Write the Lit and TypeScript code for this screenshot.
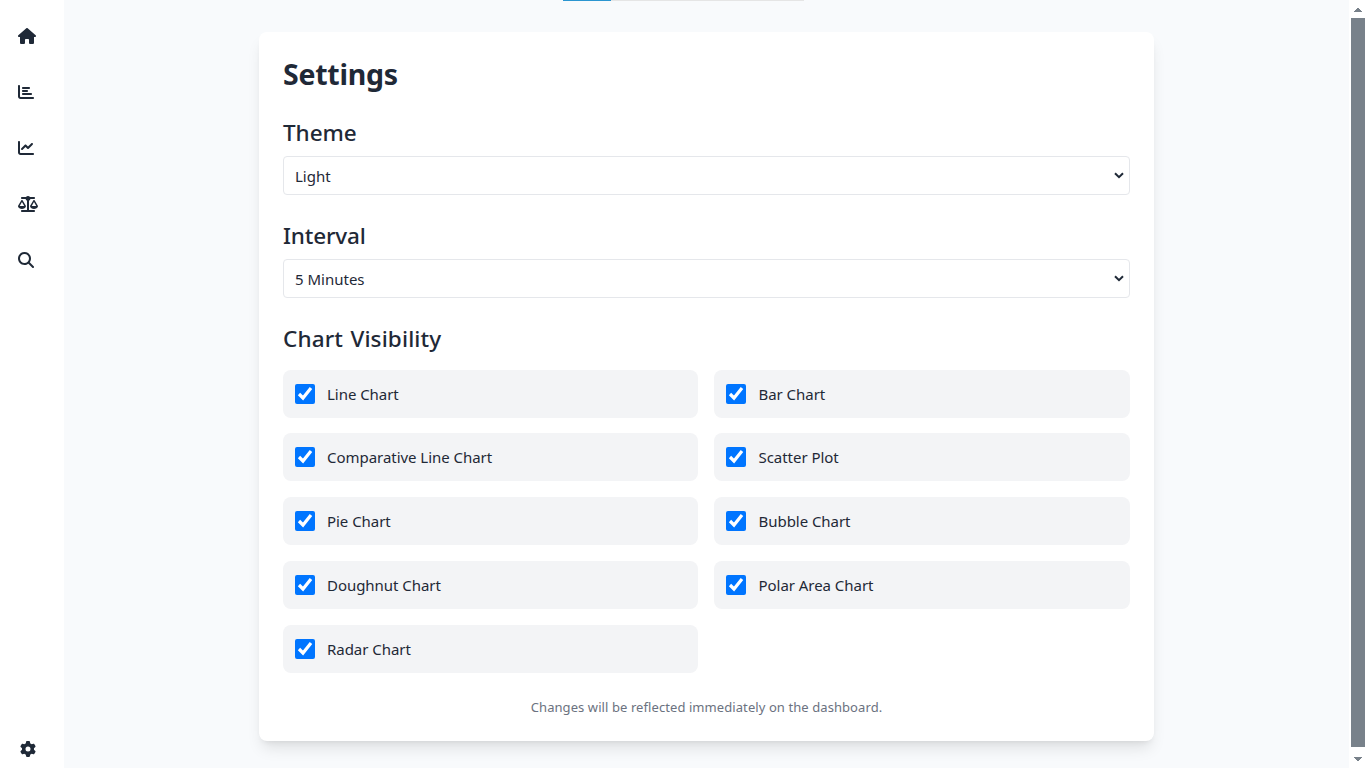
import { LitElement, html, css, svg } from "lit";
import { customElement } from "lit/decorators.js";
import { styleMap } from "lit/directives/style-map.js";

interface Icon {
  width: number;
  path: string;
}

const ICONS: Record<string, Icon> = {
  home: {
    width: 576,
    path: "M575.8 255.5c0 18-15 32.1-32 32.1h-32l.7 160.2c0 2.7-.2 5.4-.5 8.1V472c0 22.1-17.9 40-40 40H456c-1.1 0-2.2 0-3.3-.1c-1.4 .1-2.8 .1-4.2 .1H416 392c-22.1 0-40-17.9-40-40V448 384c0-17.7-14.3-32-32-32H256c-17.7 0-32 14.3-32 32v64 24c0 22.1-17.9 40-40 40H160 128.1c-1.5 0-3-.1-4.5-.2c-1.2 .1-2.4 .2-3.6 .2H104c-22.1 0-40-17.9-40-40V360c0-.9 0-1.9 .1-2.8V287.6H32c-18 0-32-14-32-32.1c0-9 3-17 10-24L266.4 8c7-7 15-8 22-8s15 2 21 7L564.8 231.5c8 7 12 15 11 24z",
  },
  bars: {
    width: 512,
    path: "M32 32c17.7 0 32 14.3 32 32V400c0 8.8 7.2 16 16 16H480c17.7 0 32 14.3 32 32s-14.3 32-32 32H80c-44.2 0-80-35.8-80-80V64C0 46.3 14.3 32 32 32zm96 96c0-17.7 14.3-32 32-32l192 0c17.7 0 32 14.3 32 32s-14.3 32-32 32l-192 0c-17.7 0-32-14.3-32-32zm32 64H288c17.7 0 32 14.3 32 32s-14.3 32-32 32H160c-17.7 0-32-14.3-32-32s14.3-32 32-32zm0 96H416c17.7 0 32 14.3 32 32s-14.3 32-32 32H160c-17.7 0-32-14.3-32-32s14.3-32 32-32z",
  },
  line: {
    width: 512,
    path: "M64 64c0-17.7-14.3-32-32-32S0 46.3 0 64V400c0 44.2 35.8 80 80 80H480c17.7 0 32-14.3 32-32s-14.3-32-32-32H80c-8.8 0-16-7.2-16-16V64zm406.6 86.6c12.5-12.5 12.5-32.8 0-45.3s-32.8-12.5-45.3 0L320 210.7l-57.4-57.4c-12.5-12.5-32.8-12.5-45.3 0l-112 112c-12.5 12.5-12.5 32.8 0 45.3s32.8 12.5 45.3 0L240 221.3l57.4 57.4c12.5 12.5 32.8 12.5 45.3 0l128-128z",
  },
  scale: {
    width: 640,
    path: "M384 32H512c17.7 0 32 14.3 32 32s-14.3 32-32 32H398.4c-5.2 25.8-22.9 47.1-46.4 57.3V448H512c17.7 0 32 14.3 32 32s-14.3 32-32 32H320 128c-17.7 0-32-14.3-32-32s14.3-32 32-32H288V153.3c-23.5-10.3-41.2-31.6-46.4-57.3H128c-17.7 0-32-14.3-32-32s14.3-32 32-32H256c14.6-19.4 37.8-32 64-32s49.4 12.6 64 32zm55.6 288H584.4L512 195.8 439.6 320zM512 416c-62.9 0-115.2-34-126-78.9c-2.6-11 1-22.3 6.7-32.1l95.2-163.2c5-8.6 14.2-13.8 24.1-13.8s19.1 5.3 24.1 13.8l95.2 163.2c5.7 9.8 9.3 21.1 6.7 32.1C627.2 382 574.9 416 512 416zM126.8 195.8L54.4 320H199.3L126.8 195.8zM.9 337.1c-2.6-11 1-22.3 6.7-32.1l95.2-163.2c5-8.6 14.2-13.8 24.1-13.8s19.1 5.3 24.1 13.8l95.2 163.2c5.7 9.8 9.3 21.1 6.7 32.1C242 382 189.7 416 126.8 416S11.7 382 .9 337.1z",
  },
  search: {
    width: 512,
    path: "M416 208c0 45.9-14.9 88.3-40 122.7L502.6 457.4c12.5 12.5 12.5 32.8 0 45.3s-32.8 12.5-45.3 0L330.7 376c-34.4 25.2-76.8 40-122.7 40C93.1 416 0 322.9 0 208S93.1 0 208 0S416 93.1 416 208zM208 352a144 144 0 1 0 0-288 144 144 0 1 0 0 288z",
  },
  gear: {
    width: 512,
    path: "M495.9 166.6c3.2 8.7 .5 18.4-6.4 24.6l-43.3 39.4c1.1 8.3 1.7 16.8 1.7 25.4s-.6 17.1-1.7 25.4l43.3 39.4c6.9 6.2 9.6 15.9 6.4 24.6c-4.4 11.9-9.7 23.3-15.8 34.3l-4.7 8.1c-6.6 11-14 21.4-22.1 31.2c-5.9 7.2-15.7 9.6-24.5 6.8l-55.7-17.7c-13.4 10.3-28.2 18.9-44 25.4l-12.5 57.1c-2 9.1-9 16.3-18.2 17.8c-13.8 2.3-28 3.5-42.5 3.5s-28.7-1.2-42.5-3.5c-9.2-1.5-16.2-8.7-18.2-17.8l-12.5-57.1c-15.8-6.5-30.6-15.1-44-25.4L83.1 425.9c-8.8 2.8-18.6 .3-24.5-6.8c-8.1-9.8-15.5-20.2-22.1-31.2l-4.7-8.1c-6.1-11-11.4-22.4-15.8-34.3c-3.2-8.7-.5-18.4 6.4-24.6l43.3-39.4C64.6 273.1 64 264.6 64 256s.6-17.1 1.7-25.4L22.4 191.2c-6.9-6.2-9.6-15.9-6.4-24.6c4.4-11.9 9.7-23.3 15.8-34.3l4.7-8.1c6.6-11 14-21.4 22.1-31.2c5.9-7.2 15.7-9.6 24.5-6.8l55.7 17.7c13.4-10.3 28.2-18.9 44-25.4l12.5-57.1c2-9.1 9-16.3 18.2-17.8C227.3 1.2 241.5 0 256 0s28.7 1.2 42.5 3.5c9.2 1.5 16.2 8.7 18.2 17.8l12.5 57.1c15.8 6.5 30.6 15.1 44 25.4l55.7-17.7c8.8-2.8 18.6-.3 24.5 6.8c8.1 9.8 15.5 20.2 22.1 31.2l4.7 8.1c6.1 11 11.4 22.4 15.8 34.3zM256 336a80 80 0 1 0 0-160 80 80 0 1 0 0 160z",
  },
};

const NAV = ["home", "bars", "line", "scale", "search"];

const CHARTS = [
  "Line Chart",
  "Bar Chart",
  "Comparative Line Chart",
  "Scatter Plot",
  "Pie Chart",
  "Bubble Chart",
  "Doughnut Chart",
  "Polar Area Chart",
  "Radar Chart",
];

@customElement("app-root")
export class AppRoot extends LitElement {
  static styles = css`
    :host {
      display: flex;
      width: 100vw;
      height: 100vh;
      overflow: hidden;
      background: #f8fafc;
      color: #1f2937;
      font-family: "Noto Sans", "Open Sans", sans-serif;
      font-size: 15px;
      line-height: 24px;
    }
    * {
      box-sizing: border-box;
    }
    .sidebar {
      flex: none;
      width: 64px;
      background: #fff;
      display: flex;
      flex-direction: column;
      gap: 40px;
      padding: 28px 0 11px 18px;
    }
    .icon {
      display: block;
      height: 16px;
      fill: #1f2937;
    }
    .gear {
      margin: auto 0 0 2px;
    }
    .main {
      flex: 1;
      min-width: 0;
      display: flex;
      flex-direction: column;
      align-items: center;
    }
    .progress {
      flex: none;
      width: 241px;
      height: 1px;
      margin-right: 46px;
      background: #e5e5e5;
    }
    .progress-fill {
      height: 1px;
      background: #2b95d0;
    }
    .card {
      width: 895px;
      height: 709px;
      margin-top: 31px;
      padding: 24px;
      background: #fff;
      border-radius: 8px;
      box-shadow: 0 10px 15px -3px rgba(0, 0, 0, 0.1),
        0 4px 6px -4px rgba(0, 0, 0, 0.1);
    }
    h1,
    h2,
    p {
      margin: 0;
    }
    h1 {
      font-size: 28.5px;
      line-height: 36px;
      font-weight: 700;
      letter-spacing: -0.25px;
      margin-bottom: 24px;
    }
    h2 {
      font-size: 22.5px;
      line-height: 32px;
      font-weight: 550;
      letter-spacing: -0.05px;
      word-spacing: 1.5px;
      padding-top: 1px;
      margin-bottom: 7px;
    }
    .interval {
      letter-spacing: -0.15px;
    }
    .visibility {
      letter-spacing: 0.12px;
    }
    .field {
      display: grid;
      grid-template-columns: 1fr 21px;
      align-items: center;
      margin-bottom: 24px;
    }
    select {
      grid-area: 1 / 1 / 2 / 3;
      appearance: none;
      width: 100%;
      height: 39px;
      margin: 0;
      padding: 0 11px;
      border: 1px solid #e5e7eb;
      border-radius: 4px;
      background: #fff;
      color: inherit;
      font: inherit;
    }
    .chevron {
      grid-area: 1 / 2 / 2 / 3;
      display: block;
      width: 10px;
      height: 7px;
      margin-left: 5px;
      fill: none;
      stroke: #1f2937;
      stroke-width: 2;
      pointer-events: none;
    }
    .grid {
      display: grid;
      grid-template-columns: 415px 416px;
      gap: 15.75px 16px;
      padding-top: 7.6px;
    }
    .option {
      display: flex;
      align-items: center;
      gap: 12px;
      height: 48px;
      padding: 0 12px;
      border-radius: 8px;
      background: #f3f4f6;
      letter-spacing: -0.04px;
    }
    .option:nth-child(even) {
      gap: 12.5px;
    }
    .option input {
      width: 20px;
      height: 20px;
      margin: 0;
      accent-color: #0075ff;
    }
    .note {
      margin-top: 24.4px;
      text-align: center;
      font-size: 13px;
      line-height: 20px;
      letter-spacing: 0.08px;
      color: #6b7280;
    }
    .scrollbar {
      flex: none;
      width: 17px;
      background: #fff;
      display: flex;
      flex-direction: column;
      align-items: center;
    }
    .arrow {
      display: block;
      width: 8px;
      height: 18px;
      margin-left: 1px;
      fill: #78818a;
    }
    .down {
      height: 21px;
    }
    .thumb {
      flex: 1;
      width: 14px;
      margin-left: 1px;
      background: #78818a;
    }
  `;

  private icon(name: string, extra = "") {
    const { width, path } = ICONS[name];
    return html`<svg
      class="icon ${extra}"
      viewBox="0 0 ${width} 512"
      style=${styleMap({ width: `${width / 32}px` })}
    >
      ${svg`<path d=${path}></path>`}
    </svg>`;
  }

  private field(options: string[]) {
    return html`<div class="field">
      <select>
        ${options.map((o) => html`<option>${o}</option>`)}
      </select>
      <svg class="chevron" viewBox="0 0 10 7">
        <path d="M1 1.2L5 5.2L9 1.2"></path>
      </svg>
    </div>`;
  }

  render() {
    return html`
      <nav class="sidebar">
        ${NAV.map((n) => this.icon(n))} ${this.icon("gear", "gear")}
      </nav>
      <main class="main">
        <div class="progress">
          <div class="progress-fill" style=${styleMap({ width: "20%" })}></div>
        </div>
        <section class="card">
          <h1>Settings</h1>
          <h2>Theme</h2>
          ${this.field(["Light", "Dark"])}
          <h2 class="interval">Interval</h2>
          ${this.field(["5 Minutes", "15 Minutes"])}
          <h2 class="visibility">Chart Visibility</h2>
          <div class="grid">
            ${CHARTS.map(
              (c) => html`<label class="option">
                <input type="checkbox" checked /><span>${c}</span>
              </label>`
            )}
          </div>
          <p class="note">Changes will be reflected immediately on the dashboard.</p>
        </section>
      </main>
      <div class="scrollbar">
        <svg class="arrow" viewBox="0 0 8 18">
          <path d="M3 8h2v1h1v1h1v1h1v1H0v-1h1v-1h1V9h1z"></path>
        </svg>
        <div class="thumb"></div>
        <svg class="arrow down" viewBox="0 0 8 21">
          <path d="M0 10h8v1H7v1H6v1H5v1H3v-1H2v-1H1v-1H0z"></path>
        </svg>
      </div>
    `;
  }
}
